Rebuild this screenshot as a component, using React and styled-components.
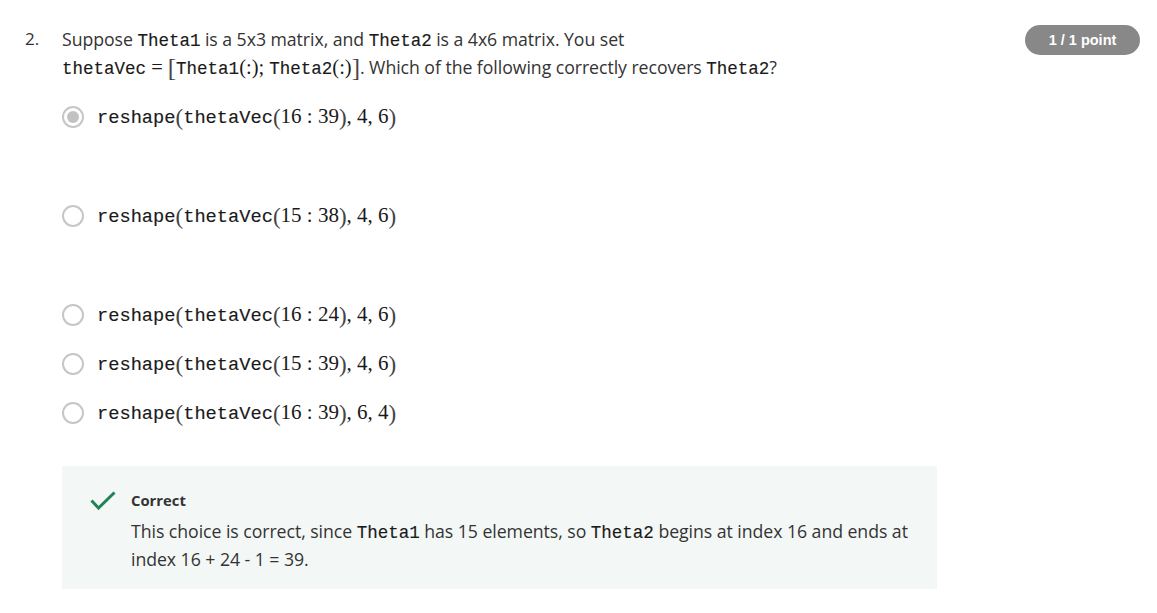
import React from 'react';
import styled, { createGlobalStyle } from 'styled-components';

const GlobalStyle = createGlobalStyle`
    body {
        margin: 0;
        background: #ffffff;
        font-family: 'Open Sans', 'Liberation Sans', sans-serif;
        color: #1f1f1f;
    }
`;

const Page = styled.div`
    display: flex;
    align-items: flex-start;
    padding: 25px 17px 0 25px;
`;

const Number = styled.div`
    width: 37px;
    flex-shrink: 0;
    font-size: 17px;
    line-height: 28px;
    color: #333333;
`;

const Body = styled.div`
    flex: 1;
`;

const HeadRow = styled.div`
    display: flex;
    justify-content: space-between;
    align-items: flex-start;
`;

const Question = styled.div`
    font-size: 17.7px;
    line-height: 28px;
    color: #333333;
    letter-spacing: -0.05px;
    white-space: nowrap;
`;

const Code = styled.span`
    font-family: 'Liberation Mono', 'DejaVu Sans Mono', monospace;
    font-size: ${(p) => p.size || 17.5}px;
    line-height: 1;
    letter-spacing: 0;
    color: #1a1a1a;
    -webkit-text-stroke: 0.15px #1a1a1a;
`;

const MathText = styled.span`
    font-family: 'Liberation Serif', 'DejaVu Serif', serif;
    font-size: ${(p) => p.size || 20.5}px;
    line-height: 1;
    letter-spacing: 0;
    color: #1a1a1a;
`;

const Big = styled.span`
    font-family: 'Liberation Serif', 'DejaVu Serif', serif;
    font-size: ${(p) => p.size || 25}px;
    font-weight: 300;
    color: #444444;
    vertical-align: -2px;
    line-height: 0;
`;

const Badge = styled.div`
    width: 115px;
    height: 30px;
    border-radius: 15px;
    background: #888888;
    color: #ffffff;
    font-family: 'Liberation Sans', Arial, sans-serif;
    font-weight: 700;
    font-size: 14.5px;
    display: flex;
    align-items: center;
    justify-content: center;
    flex-shrink: 0;
`;

const Options = styled.div`
    margin-top: 21px;
    display: flex;
    flex-direction: column;
`;

const Option = styled.div`
    display: flex;
    align-items: center;
    gap: 13px;
    height: 30px;
    margin-bottom: ${(p) => (p.tall ? 69 : 19)}px;
`;

const Radio = styled.span`
    width: 22px;
    height: 22px;
    box-sizing: border-box;
    border: 2px solid #c6c6c6;
    border-radius: 50%;
    display: flex;
    align-items: center;
    justify-content: center;
    flex-shrink: 0;
    &::after {
        content: '';
        width: 12px;
        height: 12px;
        border-radius: 50%;
        background: ${(p) => (p.checked ? '#c2c2c2' : 'transparent')};
    }
`;

const Formula = styled.span`
    white-space: nowrap;
`;

const Feedback = styled.div`
    margin-top: 19px;
    width: 875px;
    box-sizing: border-box;
    background: #f3f8f6;
    padding: 24px 20px 16px 28px;
    display: flex;
    gap: 15px;
`;

const Check = styled.svg`
    width: 26px;
    height: 20px;
    flex-shrink: 0;
    margin-top: 1px;
`;

const FeedbackText = styled.div`
    display: flex;
    flex-direction: column;
`;

const Verdict = styled.div`
    font-size: 14.8px;
    font-weight: 700;
    line-height: 20px;
    color: #333333;
    margin-bottom: 7px;
`;

const Explain = styled.div`
    font-size: 17.7px;
    line-height: 28px;
    color: #333333;
    letter-spacing: -0.05px;
    white-space: nowrap;
`;

const Reshape = ({ from, to, a, b }) => (
    <Formula>
        <Code size={18.7}>reshape</Code>
        <Big size={23}>(</Big>
        <Code size={18.7}>thetaVec</Code>
        <Big size={23}>(</Big>
        <MathText size={21}>{from}</MathText>
        <MathText size={21}> : </MathText>
        <MathText size={21}>{to}</MathText>
        <Big size={23}>)</Big>
        <MathText size={21}>, {a}, {b}</MathText>
        <Big size={23}>)</Big>
    </Formula>
);

const options = [
    { from: 16, to: 39, a: 4, b: 6, checked: true, tall: true },
    { from: 15, to: 38, a: 4, b: 6, tall: true },
    { from: 16, to: 24, a: 4, b: 6 },
    { from: 15, to: 39, a: 4, b: 6 },
    { from: 16, to: 39, a: 6, b: 4 },
];

const App = () => {
    return (
        <>
            <GlobalStyle />
            <Page>
                <Number>2.</Number>
                <Body>
                    <HeadRow>
                        <Question>
                            Suppose <Code>Theta1</Code> is a 5x3 matrix, and <Code>Theta2</Code> is a 4x6 matrix. You set
                            <br />
                            <Code>thetaVec</Code>
                            <MathText> = </MathText>
                            <Big>[</Big>
                            <Code>Theta1</Code>
                            <MathText>(:); </MathText>
                            <Code>Theta2</Code>
                            <MathText>(:)</MathText>
                            <Big>]</Big>. Which of the following correctly recovers <Code>Theta2</Code>?
                        </Question>
                        <Badge>1 / 1 point</Badge>
                    </HeadRow>

                    <Options>
                        {options.map((o, i) => (
                            <Option key={i} tall={o.tall}>
                                <Radio checked={o.checked} />
                                <Reshape from={o.from} to={o.to} a={o.a} b={o.b} />
                            </Option>
                        ))}
                    </Options>

                    <Feedback>
                        <Check viewBox="0 0 26 20">
                            <path d="M1.5 9.5 L8.5 17 L24.5 1.5" fill="none" stroke="#1f8354" strokeWidth="3" />
                        </Check>
                        <FeedbackText>
                            <Verdict>Correct</Verdict>
                            <Explain>
                                This choice is correct, since <Code>Theta1</Code> has 15 elements, so <Code>Theta2</Code> begins at index 16 and ends at
                                <br />
                                index 16 + 24 - 1 = 39.
                            </Explain>
                        </FeedbackText>
                    </Feedback>
                </Body>
            </Page>
        </>
    );
};

export default App;
